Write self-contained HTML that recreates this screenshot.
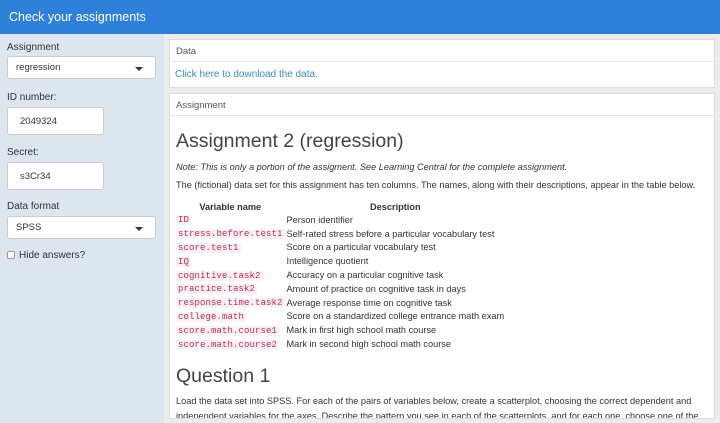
<!DOCTYPE html>
<html><head><style>
*{box-sizing:border-box;margin:0;padding:0}
body{width:720px;height:423px;overflow:hidden;font-family:"Liberation Sans",sans-serif;background:#ecf0f5;position:relative;color:#333}
.hdr{position:absolute;left:0;top:0;width:720px;height:34px;background:#2f80db;color:#fff;font-size:12.5px;padding:10px 0 0 9px}
.side{position:absolute;left:0;top:34px;width:164px;height:389px;background:#dde5ee}
.lbl{position:absolute;left:7px;font-size:10px;color:#333}
.inp{position:absolute;left:7px;background:#fff;border:1px solid #ccc;border-radius:3px;font-size:9.5px;padding-left:8px;display:flex;align-items:center}
.sel{width:149px;height:23px}
.txt{width:97px;height:28px;padding-left:12px}
.caret{position:absolute;right:12px;top:10px;border-left:4px solid transparent;border-right:4px solid transparent;border-top:4px solid #333}
.main{position:absolute;left:164px;top:34px;width:556px;height:389px;background:#ececec}
.box{position:absolute;left:5px;width:546px;background:#fff;border:1px solid #ddd}
.bh{height:22px;border-bottom:1px solid #e6e6e6;font-size:9.5px;color:#555;padding:6px 0 0 6px}
a{color:#3c8dbc;text-decoration:none}
h1{font-weight:normal;font-size:19.5px;color:#444;margin:14px 0 9px 0}
p{font-size:9.2px;margin-bottom:8px}
table{border-collapse:collapse;font-size:9.2px;margin-left:-1px;margin-top:12px}
th{font-weight:bold;text-align:center;padding:0 1px 1px}
td{padding:0 1px;height:13.8px;white-space:nowrap}
code{font-family:"Liberation Mono",monospace;color:#c7254e;background:#f9f2f4;font-size:9px;padding:0 2px;letter-spacing:.1px}
</style></head><body>
<div class="hdr">Check your assignments</div>
<div class="side">
<div class="lbl" style="top:8px">Assignment</div>
<div class="inp sel" style="top:22px">regression<span class="caret"></span></div>
<div class="lbl" style="top:58px">ID number:</div>
<div class="inp txt" style="top:73px">2049324</div>
<div class="lbl" style="top:113px">Secret:</div>
<div class="inp txt" style="top:128px">s3Cr34</div>
<div class="lbl" style="top:167px">Data format</div>
<div class="inp sel" style="top:182px">SPSS<span class="caret"></span></div>
<div style="position:absolute;left:7px;top:217px;width:8px;height:8px;border:1px solid #999;border-radius:2px;background:#fff"></div>
<div class="lbl" style="left:19px;top:216px">Hide answers?</div>
</div>
<div class="main">
<div class="box" style="top:5px;height:49px"><div class="bh">Data</div><div style="font-size:10px;padding:7px 0 0 5px"><a>Click here to download the data.</a></div></div>
<div class="box" style="top:59px;height:326px;overflow:hidden"><div class="bh">Assignment</div>
<div style="padding:0 6px">
<h1>Assignment 2 (regression)</h1>
<p><i>Note: This is only a portion of the assigment. See Learning Central for the complete assignment.</i></p>
<p style="margin-bottom:0">The (fictional) data set for this assignment has ten columns. The names, along with their descriptions, appear in the table below.</p>
<table>
<tr><th>Variable name</th><th>Description</th></tr>
<tr><td><code>ID</code></td><td>Person identifier</td></tr>
<tr><td><code>stress.before.test1</code></td><td>Self-rated stress before a particular vocabulary test</td></tr>
<tr><td><code>score.test1</code></td><td>Score on a particular vocabulary test</td></tr>
<tr><td><code>IQ</code></td><td>Intelligence quotient</td></tr>
<tr><td><code>cognitive.task2</code></td><td>Accuracy on a particular cognitive task</td></tr>
<tr><td><code>practice.task2</code></td><td>Amount of practice on cognitive task in days</td></tr>
<tr><td><code>response.time.task2</code></td><td>Average response time on cognitive task</td></tr>
<tr><td><code>college.math</code></td><td>Score on a standardized college entrance math exam</td></tr>
<tr><td><code>score.math.course1</code></td><td>Mark in first high school math course</td></tr>
<tr><td><code>score.math.course2</code></td><td>Mark in second high school math course</td></tr>
</table>
<h1 style="margin:14px 0 6px">Question 1</h1>
<p style="line-height:15px">Load the data set into SPSS. For each of the pairs of variables below, create a scatterplot, choosing the correct dependent and independent variables for the axes. Describe the pattern you see in each of the scatterplots, and for each one, choose one of the</p>
</div></div>
</div>
</body></html>
